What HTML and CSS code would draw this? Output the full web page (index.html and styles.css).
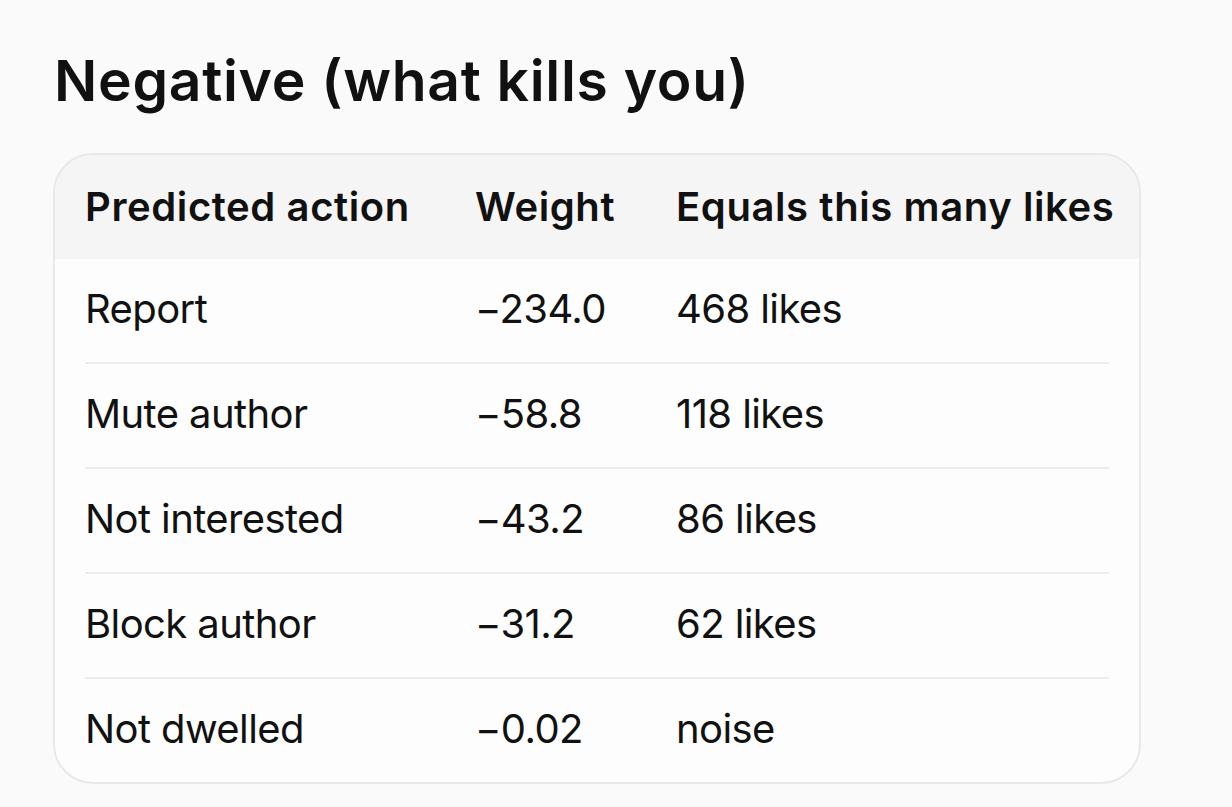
FILE: index.html
```html
<!DOCTYPE html>
<html lang="en">
<head>
<meta charset="utf-8">
<title>Negative (what kills you)</title>
<link rel="stylesheet" href="styles.css">
</head>
<body>
<h2 class="title">Negative (what kills you)</h2>
<div class="card">
  <div class="head">
    <div>Predicted action</div>
    <div>Weight</div>
    <div>Equals this many likes</div>
  </div>
  <div class="row">
    <div>Report</div>
    <div>−234.0</div>
    <div>468 likes</div>
  </div>
  <div class="row">
    <div>Mute author</div>
    <div>−58.8</div>
    <div>118 likes</div>
  </div>
  <div class="row">
    <div>Not interested</div>
    <div>−43.2</div>
    <div>86 likes</div>
  </div>
  <div class="row">
    <div>Block author</div>
    <div>−31.2</div>
    <div>62 likes</div>
  </div>
  <div class="row last">
    <div>Not dwelled</div>
    <div>−0.02</div>
    <div>noise</div>
  </div>
</div>
</body>
</html>
```

FILE: styles.css
```css
html, body {
  margin: 0;
  padding: 0;
  background: #fafafa;
  color: #111111;
  font-family: Inter, "Noto Sans", "Liberation Sans", sans-serif;
}

body {
  padding: 47px 0 0 54px;
}

.title {
  margin: 0 0 38px 0;
  font-size: 57px;
  line-height: 68px;
  font-weight: 600;
  letter-spacing: 0.7px;
}

.card {
  width: 1084px;
  margin-left: -1px;
  border: 2px solid #e8e8e8;
  border-radius: 40px;
  background: #fdfdfd;
  overflow: hidden;
}

.head,
.row {
  display: grid;
  grid-template-columns: 390px 201px 1fr;
  font-size: 40px;
  line-height: 48px;
  white-space: nowrap;
}

.head {
  background: #f5f5f5;
  font-weight: 600;
  letter-spacing: 0.6px;
  padding: 28px 30px;
}

.row {
  margin: 0 30px;
  padding: 26px 0 29px 0;
  border-bottom: 2px solid #ececec;
  font-weight: 400;
  letter-spacing: -0.6px;
}

.row.last {
  border-bottom: none;
}
```
